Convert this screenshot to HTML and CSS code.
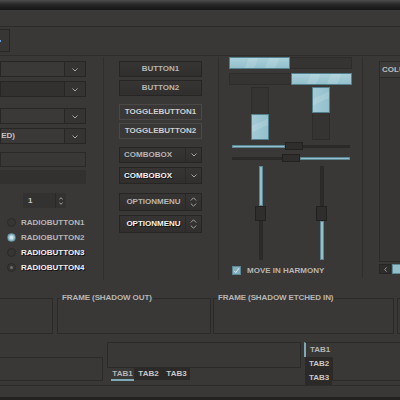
FILE: index.html
```html
<!DOCTYPE html>
<html>
<head>
<meta charset="utf-8">
<link rel="stylesheet" href="styles.css">
</head>
<body>
<div class="titlebar"></div>
<div class="menubar"></div>
<div class="toolbar">
  <div class="tool-btn"><span class="tool-icon"></span></div>
</div>

<div class="main">
  <div class="col col1">
    <div class="combo c1"><div class="combo-entry"></div><div class="combo-arrow"><svg width="6" height="4" viewBox="0 0 6 4"><polyline points="0.5,0.5 3,3 5.5,0.5" class="chev"/></svg></div></div>
    <div class="combo c2 filled"><div class="combo-entry"></div><div class="combo-arrow"><svg width="6" height="4" viewBox="0 0 6 4"><polyline points="0.5,0.5 3,3 5.5,0.5" class="chev"/></svg></div></div>
    <div class="combo c3"><div class="combo-entry"></div><div class="combo-arrow"><svg width="6" height="4" viewBox="0 0 6 4"><polyline points="0.5,0.5 3,3 5.5,0.5" class="chev"/></svg></div></div>
    <div class="combo c4"><div class="combo-entry"><span class="clip-end"><span>COMBO (DISABLED)</span></span></div><div class="combo-arrow"><svg width="6" height="4" viewBox="0 0 6 4"><polyline points="0.5,0.5 3,3 5.5,0.5" class="chev"/></svg></div></div>
    <div class="entry e1"></div>
    <div class="entry e2"></div>
    <div class="spin">
      <span class="spin-val">1</span>
      <span class="spin-btns">
        <svg width="4" height="3" viewBox="0 0 4 3"><polyline points="0.3,2.5 2,0.7 3.7,2.5" class="chev"/></svg>
        <svg width="4" height="3" viewBox="0 0 4 3"><polyline points="0.3,0.5 2,2.3 3.7,0.5" class="chev"/></svg>
      </span>
    </div>
    <div class="radio r1"><span class="dot"></span><span class="lbl">RADIOBUTTON1</span></div>
    <div class="radio"><span class="dot on"></span><span class="lbl">RADIOBUTTON2</span></div>
    <div class="radio"><span class="dot"></span><span class="lbl bright">RADIOBUTTON3</span></div>
    <div class="radio"><span class="dot mixed"></span><span class="lbl bright">RADIOBUTTON4</span></div>
  </div>

  <div class="vsep s1"></div>

  <div class="col col2">
    <div class="btn b1">BUTTON1</div>
    <div class="btn b2">BUTTON2</div>
    <div class="btn toggle t1">TOGGLEBUTTON1</div>
    <div class="btn toggle t2">TOGGLEBUTTON2</div>
    <div class="cbox cb1"><span class="cbox-text">COMBOBOX</span><span class="cbox-btn"><svg width="6" height="4" viewBox="0 0 6 4"><polyline points="0.5,0.5 3,3 5.5,0.5" class="chev"/></svg></span></div>
    <div class="cbox cb2"><span class="cbox-text bright">COMBOBOX</span><span class="cbox-btn"><svg width="6" height="4" viewBox="0 0 6 4"><polyline points="0.5,0.5 3,3 5.5,0.5" class="chev"/></svg></span></div>
    <div class="cbox om om1"><span class="cbox-text center">OPTIONMENU</span><span class="cbox-btn"><svg width="7" height="10" viewBox="0 0 7 10"><polyline points="0.8,3.5 3.5,0.8 6.2,3.5" class="chev"/><polyline points="0.8,6.5 3.5,9.2 6.2,6.5" class="chev"/></svg></span></div>
    <div class="cbox om om2"><span class="cbox-text center bright">OPTIONMENU</span><span class="cbox-btn"><svg width="7" height="10" viewBox="0 0 7 10"><polyline points="0.8,3.5 3.5,0.8 6.2,3.5" class="chev"/><polyline points="0.8,6.5 3.5,9.2 6.2,6.5" class="chev"/></svg></span></div>
  </div>

  <div class="vsep s2"></div>

  <div class="col col3">
    <div class="pbar pb1"><div class="fill" style="width:61px"></div></div>
    <div class="pbar pb2"><div class="fill" style="width:61px"></div></div>
    <div class="vbars">
      <div class="vbar vb1"><div class="fill" style="height:26px"></div></div>
      <div class="vbar vb2"><div class="fill" style="height:26px"></div></div>
    </div>
    <div class="hscale hs1"><div class="tr blue" style="width:53px"></div><div class="handle"></div><div class="tr rest"></div></div>
    <div class="hscale hs2"><div class="tr" style="width:50px"></div><div class="handle"></div><div class="tr rest blue"></div></div>
    <div class="vscales">
      <div class="vscale vs1"><div class="tr blue" style="height:40px"></div><div class="handle"></div><div class="tr rest"></div></div>
      <div class="vscale vs2"><div class="tr" style="height:40px"></div><div class="handle"></div><div class="tr rest blue"></div></div>
    </div>
    <div class="check-row">
      <span class="check"><svg width="7" height="7" viewBox="0 0 7 7"><polyline points="1,3.8 2.8,5.6 6,1.2" class="tick"/></svg></span>
      <span class="lbl">MOVE IN HARMONY</span>
    </div>
  </div>

  <div class="vsep s3"></div>

  <div class="col col4">
    <div class="tree">
      <div class="tree-head">COLUMN</div>
    </div>
    <div class="hscroll">
      <span class="sb-btn"><svg width="3" height="5" viewBox="0 0 3 5"><polyline points="2.5,0.5 0.7,2.5 2.5,4.5" class="chev"/></svg></span>
      <span class="sb-thumb"></span>
    </div>
  </div>
</div>

<div class="frames">
  <fieldset class="frame f1"><legend>FRAME (SHADOW IN)</legend><div class="frame-body"></div></fieldset>
  <fieldset class="frame f2"><legend>FRAME (SHADOW OUT)</legend><div class="frame-body"></div></fieldset>
  <fieldset class="frame f3"><legend>FRAME (SHADOW ETCHED IN)</legend><div class="frame-body"></div></fieldset>
  <fieldset class="frame f4"><legend>FRAME (SHADOW ETCHED OUT)</legend><div class="frame-body"></div></fieldset>
</div>

<div class="notebooks">
  <div class="nb0"></div>
  <div class="nb1">
    <div class="nb1-page"></div>
    <div class="nb1-tabs">
      <span class="tab active">TAB1</span>
      <span class="tab dark">TAB2</span>
      <span class="tab dark">TAB3</span>
    </div>
  </div>
  <div class="nb2">
    <div class="nb2-tabs">
      <span class="vtab active">TAB1</span>
      <span class="vtab dark">TAB2</span>
      <span class="vtab dark">TAB3</span>
    </div>
    <div class="nb2-page"></div>
  </div>
</div>

<div class="statusline"></div>
<div class="bottom-edge"></div>
</body>
</html>
```

FILE: styles.css
```css
* { box-sizing: border-box; }

html, body {
  margin: 0;
  padding: 0;
}

body {
  width: 400px;
  height: 400px;
  overflow: hidden;
  background: #393836;
  color: #b6b5b3;
  font-family: "Liberation Sans", Arial, sans-serif;
  font-size: 8px;
  font-weight: bold;
  line-height: 10px;
}

.chev { fill: none; stroke: #a3a2a0; stroke-width: 1; }
.bright { color: #f0f0f0; text-shadow: 1px 1px 0 #151515; }

/* top chrome */
.titlebar {
  height: 10px;
  background: linear-gradient(#4d4d4d 0px, #2a2a2a 4px, #141414 10px);
}
.menubar {
  height: 17px;
  background: #3a3937;
  border-bottom: 1px solid #2b2a29;
}
.toolbar {
  height: 29px;
  padding-top: 2px;
  border-bottom: 1px solid #2e2d2c;
}
.tool-btn {
  width: 25px;
  height: 23px;
  margin-left: -15px;
  border: 1px solid #272625;
  background: #373634;
  display: flex;
  align-items: center;
  justify-content: flex-end;
  padding-right: 8px;
}
.tool-icon {
  width: 3px;
  height: 2px;
  background: #6b9fe0;
}

/* main area */
.main {
  display: flex;
  height: 224px;
}
.main > * { flex: none; }
.col { display: flex; flex-direction: column; }
.vsep {
  width: 1px;
  background: #2f2e2c;
  margin-top: 1px;
}
.s1 { margin-left: 17px; }
.s2 { margin-left: 16px; }
.s3 { margin-left: 10px; height: 221px; }

/* column 1 */
.col1 { width: 86px; padding-top: 5px; }
.combo { display: flex; height: 16px; }
.combo-entry {
  flex: 1;
  border: 1px solid #272625;
  background: #3a3937;
  display: flex;
  align-items: center;
  overflow: hidden;
}
.combo.filled .combo-entry { background: #323130; }
.combo-arrow {
  width: 22px;
  margin-left: -1px;
  border: 1px solid #272625;
  background: #353432;
  display: flex;
  align-items: center;
  justify-content: center;
  padding-top: 1px;
}
.c2 { margin-top: 4px; }
.c3 { margin-top: 11px; }
.c4 { margin-top: 4px; }
.clip-end {
  display: flex;
  justify-content: flex-end;
  width: 14px;
  flex: none;
  white-space: nowrap;
  color: #c4c3c1;
}
.entry { border: 1px solid #2a2928; }
.e1 { margin-top: 8px; height: 15px; }
.e2 { margin-top: 3px; height: 14px; background: #323130; border-color: #323130; }
.spin {
  margin-top: 9px;
  margin-left: 23px;
  width: 43px;
  height: 15px;
  background: #333230;
  display: flex;
  align-items: center;
}
.spin-val { padding-left: 5px; flex: 1; color: #c4c3c1; }
.spin-btns {
  width: 11px;
  height: 100%;
  border-left: 1px solid #2a2928;
  display: flex;
  flex-direction: column;
  align-items: center;
  justify-content: center;
  gap: 2px;
}
.spin-btns svg { display: block; }
.radio {
  height: 15px;
  display: flex;
  align-items: center;
  padding-left: 7px;
}
.r1 { margin-top: 7px; }
.dot {
  width: 9px;
  height: 9px;
  border-radius: 50%;
  border: 1px solid #2a2928;
  background: #363533;
  margin-right: 5px;
  flex: none;
  display: flex;
  align-items: center;
  justify-content: center;
}
.dot.on {
  background: radial-gradient(circle, #cfe4ea 0 1.5px, #8fbccb 2.5px);
  border-color: #5d8794;
}
.dot.mixed::after {
  content: "";
  width: 3px;
  height: 3px;
  border-radius: 50%;
  background: #6f6e6c;
}
.lbl { white-space: nowrap; }

/* column 2 */
.col2 { width: 83px; margin-left: 15px; padding-top: 5px; }
.btn {
  height: 16px;
  border: 1px solid #262524;
  background: linear-gradient(#363533, #302f2d);
  display: flex;
  align-items: center;
  justify-content: center;
}
.b2 { margin-top: 3px; }
.toggle {
  border-color: #4a4947;
  background: #393836;
  color: #cfcecc;
}
.t1 { margin-top: 8px; }
.t2 { margin-top: 3px; }
.cbox {
  border: 1px solid #262524;
  background: linear-gradient(#363533, #302f2d);
  display: flex;
  align-items: center;
  height: 16px;
}
.cb1 { margin-top: 8px; }
.cb2 { margin-top: 4px; height: 17px; }
.om { height: 18px; }
.om1 { margin-top: 9px; }
.om2 { margin-top: 4px; }
.cbox-text {
  flex: 1;
  padding-left: 4px;
  white-space: nowrap;
  height: 100%;
  display: flex;
  align-items: center;
  border-right: 1px solid #2a2928;
}
.cbox-text.center { justify-content: center; padding-left: 2px; }
.cbox-btn {
  width: 15px;
  display: flex;
  align-items: center;
  justify-content: center;
}

/* column 3 */
.col3 { width: 123px; margin-left: 10px; padding-top: 1px; }
.pbar {
  height: 12px;
  border: 1px solid #2d2c2a;
  background: #353432;
  display: flex;
}
.pb2 { margin-top: 4px; justify-content: flex-end; }
.fill {
  border: 1px solid #52808c;
  background:
    linear-gradient(115deg, transparent 0 30%, rgba(255,255,255,0.12) 30% 45%, transparent 45% 62%, rgba(255,255,255,0.12) 62% 78%, transparent 78%),
    linear-gradient(#a9d0da, #93c0cc);
  margin: -1px;
}
.pb1 .fill { margin-right: 0; }
.pb2 .fill { margin-left: 0; }
.vbars {
  margin-top: 2px;
  height: 53px;
  display: flex;
  padding-left: 22px;
  gap: 43px;
}
.vbar {
  width: 18px;
  border: 1px solid #2d2c2a;
  background: #353432;
  display: flex;
  flex-direction: column;
}
.vb1 { justify-content: flex-end; }
.vbar .fill {
  background:
    linear-gradient(155deg, transparent 0 35%, rgba(255,255,255,0.13) 35% 55%, transparent 55%),
    linear-gradient(90deg, #a3cbd5, #93c0cc);
}
.vb1 .fill { margin-top: 0; }
.vb2 .fill { margin-bottom: 0; }
.hscale {
  height: 8px;
  display: flex;
  align-items: center;
  margin-left: 3px;
  width: 118px;
}
.hs1 { margin-top: 2px; }
.hs2 { margin-top: 4px; }
.tr {
  background: #2c2b29;
  border: 1px solid #2a2928;
  flex: none;
}
.tr.blue { background: #93bfcb; border-color: #5d8794; }
.tr.rest { flex: 1; }
.hscale .tr { height: 3px; }
.hscale .handle {
  width: 18px;
  height: 8px;
  background: #2f2e2c;
  border: 1px solid #222120;
  flex: none;
}
.vscales {
  margin-top: 4px;
  height: 94px;
  display: flex;
  padding-left: 26px;
  gap: 50px;
}
.vscale {
  width: 11px;
  display: flex;
  flex-direction: column;
  align-items: center;
}
.vscale .tr { width: 4px; }
.vscale .handle {
  width: 11px;
  height: 15px;
  background: #2f2e2c;
  border: 1px solid #222120;
  flex: none;
}
.check-row {
  margin-top: 5px;
  height: 11px;
  display: flex;
  align-items: center;
  padding-left: 3px;
}
.check {
  width: 9px;
  height: 9px;
  background: #84aebb;
  border: 1px solid #5d8794;
  margin-right: 6px;
  display: flex;
  align-items: center;
  justify-content: center;
}
.check svg { display: block; }
.tick { fill: none; stroke: #d8eaef; stroke-width: 1; }

/* column 4 */
.col4 { width: 60px; margin-left: 16px; padding-top: 5px; }
.tree {
  height: 201px;
  border: 1px solid #2b2a28;
  background: #373634;
}
.tree-head {
  height: 16px;
  border-bottom: 1px solid #2b2a28;
  background: #3c3b39;
  padding-left: 2px;
  display: flex;
  align-items: center;
  color: #bebdbb;
}
.hscroll {
  margin-top: 2px;
  height: 10px;
  display: flex;
}
.sb-btn {
  width: 12px;
  background: #2e2d2b;
  border: 1px solid #262524;
  display: flex;
  align-items: center;
  justify-content: center;
}
.sb-thumb {
  flex: 1;
  background: #93bfcb;
  border: 1px solid #5d8794;
  margin-left: 1px;
}

/* frames */
.frames {
  display: flex;
  margin-top: 13px;
  margin-left: -100px;
}
.frame {
  margin: 0;
  padding: 0;
  border: 1px solid #2b2a28;
  min-width: 0;
  flex: none;
}
.frame legend {
  padding: 0 1px;
  margin-left: 3px;
  line-height: 10px;
  white-space: nowrap;
  letter-spacing: -0.1px;
}
.frame-body { height: 30px; }
.f1 { width: 153px; }
.f2 { width: 154px; margin-left: 4px; }
.f3 { width: 181px; margin-left: 2px; }
.f4 { width: 150px; margin-left: 3px; }

/* notebooks */
.notebooks {
  display: flex;
  margin-top: 8px;
  height: 43px;
}
.notebooks > * { flex: none; }
.nb0 {
  width: 153px;
  margin-left: -50px;
  margin-top: 15px;
  height: 24px;
  border: 1px solid #2b2a28;
}
.nb1 {
  width: 194px;
  margin-left: 4px;
  display: flex;
  flex-direction: column;
}
.nb1-page {
  height: 26px;
  border: 1px solid #2b2a28;
}
.nb1-tabs {
  display: flex;
  padding-left: 4px;
  height: 13px;
}
.tab {
  display: flex;
  align-items: center;
  justify-content: center;
  height: 12px;
}
.tab.active {
  width: 23px;
  height: 13px;
  border-bottom: 2px solid #7fa9b6;
  padding-top: 1px;
}
.tab.dark { background: #2b2a28; color: #c8c7c5; }
.tab:nth-child(2) { width: 29px; }
.tab:nth-child(3) { width: 27px; }
.nb2 {
  margin-left: 3px;
  display: flex;
  width: 110px;
}
.nb2-tabs {
  display: flex;
  flex-direction: column;
  width: 28px;
  flex: none;
}
.vtab {
  height: 15px;
  display: flex;
  align-items: center;
  padding-left: 5px;
}
.vtab.active {
  border-left: 2px solid #7fa9b6;
  border-top: 1px solid #2b2a28;
  background: #393836;
  margin-right: -1px;
  position: relative;
  z-index: 1;
  padding-left: 4px;
}
.vtab.dark { background: #2b2a28; margin-left: 1px; padding-left: 4px; color: #c8c7c5; }
.vtab:nth-child(3) { height: 14px; }
.nb2-page {
  flex: 1;
  height: 39px;
  border: 1px solid #2b2a28;
}

.statusline {
  height: 12px;
  border-top: 1px solid #2d2c2a;
}
.bottom-edge {
  height: 4px;
  background: #232221;
}
```
